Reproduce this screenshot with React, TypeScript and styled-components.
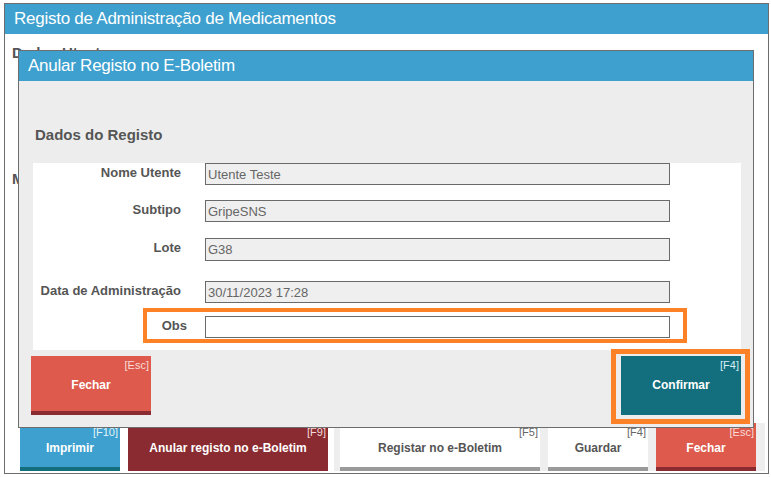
import styled, { createGlobalStyle } from 'styled-components';

const GlobalStyle = createGlobalStyle`
  html, body {
    margin: 0;
    padding: 0;
    background: #ffffff;
    font-family: "Liberation Sans", Arial, sans-serif;
  }
  * {
    box-sizing: border-box;
  }
`;

interface Field {
    label: string;
    value: string;
    top: number;
    height?: number;
}

const fields: Field[] = [
    { label: 'Nome Utente', value: 'Utente Teste', top: 12 },
    { label: 'Subtipo', value: 'GripeSNS', top: 15 },
    { label: 'Lote', value: 'G38', top: 16, height: 23 },
    { label: 'Data de Administração', value: '30/11/2023 17:28', top: 20 },
];

interface BarAction {
    label: string;
    hint: string;
    width: number;
    variant: Variant;
}

type Variant = 'blue' | 'wine' | 'plain' | 'red' | 'teal';

const leftActions: BarAction[] = [
    { label: 'Imprimir', hint: '[F10]', width: 100, variant: 'blue' },
    { label: 'Anular registo no e-Boletim', hint: '[F9]', width: 200, variant: 'wine' },
];

const rightActions: BarAction[] = [
    { label: 'Registar no e-Boletim', hint: '[F5]', width: 200, variant: 'plain' },
    { label: 'Guardar', hint: '[F4]', width: 100, variant: 'plain' },
    { label: 'Fechar', hint: '[Esc]', width: 100, variant: 'red' },
];

const palette: Record<Variant, { bg: string; stripe: string; text: string; hint: string }> = {
    blue: { bg: '#3da0ce', stripe: '#136e7e', text: '#ffffff', hint: '#e6f3fa' },
    wine: { bg: '#8a2b31', stripe: '#8a2b31', text: '#ffffff', hint: '#f3d9db' },
    plain: { bg: '#ffffff', stripe: '#9a9a9a', text: '#555555', hint: '#666666' },
    red: { bg: '#dd5a4c', stripe: '#8a2b31', text: '#ffffff', hint: '#f9dcd8' },
    teal: { bg: '#136e7e', stripe: '#136e7e', text: '#ffffff', hint: '#d7eef2' },
};

function App(): JSX.Element {
    return (
        <>
            <GlobalStyle />
            <Page>
                <Window>
                    <TitleBar>Registo de Administração de Medicamentos</TitleBar>
                    <Content>
                        <BackHeading>Dados Utente</BackHeading>
                        <BackHeading $top={108}>Medicamento</BackHeading>
                    </Content>
                    <ActionBar>
                        <ActionGroup>
                            {leftActions.map(a => (
                                <BarButton key={a.label} $width={a.width} $variant={a.variant}>
                                    <Hint $variant={a.variant}>{a.hint}</Hint>
                                    {a.label}
                                </BarButton>
                            ))}
                        </ActionGroup>
                        <ActionGroup $shaded>
                            {rightActions.map(a => (
                                <BarButton key={a.label} $width={a.width} $variant={a.variant}>
                                    <Hint $variant={a.variant}>{a.hint}</Hint>
                                    {a.label}
                                </BarButton>
                            ))}
                        </ActionGroup>
                    </ActionBar>

                    <Modal>
                        <ModalTitle>Anular Registo no E-Boletim</ModalTitle>
                        <ModalBody>
                            <SectionHeading>Dados do Registo</SectionHeading>
                            <Panel>
                                {fields.map(f => (
                                    <FieldRow key={f.label} $top={f.top}>
                                        <FieldLabel $width={148}>{f.label}</FieldLabel>
                                        <FieldInput $gap={24} $height={f.height} readOnly value={f.value} />
                                    </FieldRow>
                                ))}
                                <ObsFrame>
                                    <FieldLabel $width={40}>Obs</FieldLabel>
                                    <FieldInput $gap={18} $editable defaultValue="" />
                                </ObsFrame>
                            </Panel>
                            <ModalActions>
                                <ModalButton $variant="red" $offset={6}>
                                    <Hint $variant="red">[Esc]</Hint>
                                    Fechar
                                </ModalButton>
                                <FocusFrame>
                                    <ModalButton $variant="teal">
                                        <Hint $variant="teal">[F4]</Hint>
                                        Confirmar
                                    </ModalButton>
                                </FocusFrame>
                            </ModalActions>
                        </ModalBody>
                    </Modal>
                </Window>
            </Page>
        </>
    );
}

const Page = styled.div`
    width: 771px;
    height: 477px;
    padding: 3px 2px 0 4px;
`;

const Window = styled.div`
    position: relative;
    width: 765px;
    height: 471px;
    border: 1px solid #6d6d6d;
    display: flex;
    flex-direction: column;
    background: #ffffff;
`;

const TitleBar = styled.div`
    height: 30px;
    line-height: 30px;
    padding-left: 9px;
    background: #3da0ce;
    color: #ffffff;
    font-size: 17px;
    letter-spacing: -0.25px;
    white-space: nowrap;
`;

const Content = styled.div`
    flex: 1;
    padding: 10px 7px 0;
`;

const BackHeading = styled.div<{ $top?: number }>`
    margin-top: ${p => p.$top ?? 0}px;
    font-size: 15px;
    line-height: 18px;
    font-weight: bold;
    color: #555555;
`;

const ActionBar = styled.div`
    display: flex;
    justify-content: space-between;
    height: 50px;
    padding: 0 3px 2px 15px;
`;

const ActionGroup = styled.div<{ $shaded?: boolean }>`
    display: flex;
    gap: 8px;
    padding: ${p => (p.$shaded ? '0 9px 0 6px' : '0')};
    background: ${p => (p.$shaded ? '#eeeeee' : 'transparent')};
`;

const BarButton = styled.div<{ $width: number; $variant: Variant }>`
    position: relative;
    width: ${p => p.$width}px;
    height: 48px;
    padding-top: 5px;
    display: flex;
    align-items: center;
    justify-content: center;
    background: ${p => palette[p.$variant].bg};
    border-bottom: 4px solid ${p => palette[p.$variant].stripe};
    color: ${p => palette[p.$variant].text};
    font-size: 12px;
    font-weight: bold;
    white-space: nowrap;
`;

const Hint = styled.span<{ $variant: Variant }>`
    position: absolute;
    top: 3px;
    right: 2px;
    font-size: 11px;
    font-weight: normal;
    line-height: 12px;
    color: ${p => palette[p.$variant].hint};
`;

const Modal = styled.div`
    position: absolute;
    left: 13px;
    top: 46px;
    width: 736px;
    border: 1px solid #6d6d6d;
    background: #ededed;
`;

const ModalTitle = styled.div`
    height: 30px;
    line-height: 30px;
    padding-left: 9px;
    background: #3da0ce;
    color: #ffffff;
    font-size: 17px;
    letter-spacing: -0.25px;
`;

const ModalBody = styled.div`
    padding: 0 12px 3px 12px;
`;

const SectionHeading = styled.div`
    padding: 45px 0 7px 4px;
    font-size: 15px;
    line-height: 18px;
    font-weight: bold;
    color: #555555;
`;

const Panel = styled.div`
    margin-left: 2px;
    padding-bottom: 7px;
    background: #ffffff;
`;

const FieldRow = styled.div<{ $top: number }>`
    display: flex;
    align-items: flex-start;
    margin-top: ${p => p.$top}px;
`;

const FieldLabel = styled.label<{ $width: number }>`
    width: ${p => p.$width}px;
    flex-shrink: 0;
    padding-top: 2px;
    text-align: right;
    font-size: 13px;
    line-height: 16px;
    font-weight: bold;
    color: #555555;
    white-space: nowrap;
`;

const FieldInput = styled.input<{ $gap: number; $height?: number; $editable?: boolean }>`
    margin: 0 0 0 ${p => p.$gap}px;
    width: 465px;
    height: ${p => p.$height ?? 22}px;
    padding: 0 2px;
    border: 1px solid #6a6a6a;
    border-radius: 0;
    outline: none;
    background: ${p => (p.$editable ? '#ffffff' : '#efefef')};
    color: #666666;
    font-family: "Liberation Sans", Arial, sans-serif;
    font-size: 13px;
`;

const ObsFrame = styled.div`
    display: flex;
    align-items: flex-start;
    width: 544px;
    margin: 5px 0 0 110px;
    padding: 4px 0 1px 0;
    border: 4px solid #fd8126;
`;

const ModalActions = styled.div`
    display: flex;
    justify-content: space-between;
    align-items: flex-start;
    margin-right: -9px;
`;

const FocusFrame = styled.div`
    margin-top: -1px;
    padding: 2px 4px 4px 5px;
    border: 5px solid #fd8126;
`;

const ModalButton = styled.div<{ $variant: Variant; $offset?: number }>`
    position: relative;
    width: 120px;
    height: 59px;
    margin-top: ${p => p.$offset ?? 0}px;
    padding-top: 3px;
    display: flex;
    align-items: center;
    justify-content: center;
    background: ${p => palette[p.$variant].bg};
    border-bottom: 4px solid ${p => palette[p.$variant].stripe};
    color: ${p => palette[p.$variant].text};
    font-size: 12px;
    font-weight: bold;
`;

export default App;
